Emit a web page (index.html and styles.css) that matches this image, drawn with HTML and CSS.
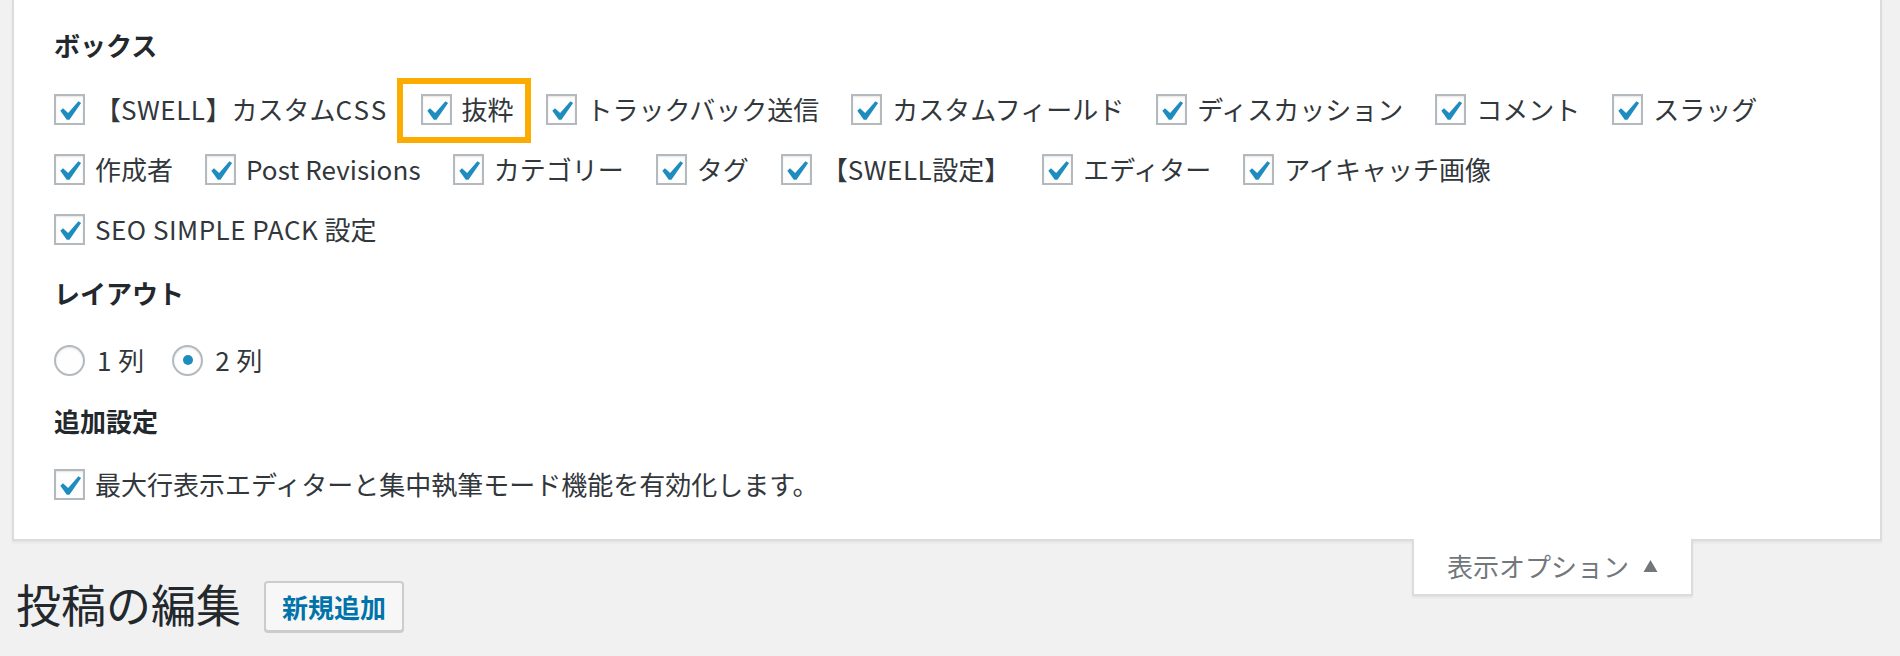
FILE: index.html
```html
<!DOCTYPE html>
<html lang="ja">
<head>
<meta charset="utf-8">
<title>投稿の編集</title>
<link rel="stylesheet" href="styles.css">
</head>
<body>
<div class="wrap">
  <div class="screen-options">
    <h5 class="sec sec-boxes">ボックス</h5>
    <div class="rows">
      <div class="row">
        <label class="item"><span class="cb"><svg viewBox="0 0 27 27"><path d="M14.83 4.89l1.34.94-5.81 8.38H9.02L5.78 9.67l1.34-1.25 2.57 2.4z" transform="translate(-7.25 -4.6) scale(2)"/></svg></span><span class="txt">【<span class="lat">SWELL</span>】カスタム<span class="lat lat-wide">CSS</span></span></label>
        <label class="item highlight"><span class="cb"><svg viewBox="0 0 27 27"><path d="M14.83 4.89l1.34.94-5.81 8.38H9.02L5.78 9.67l1.34-1.25 2.57 2.4z" transform="translate(-7.25 -4.6) scale(2)"/></svg></span><span class="txt">抜粋</span></label>
        <label class="item"><span class="cb"><svg viewBox="0 0 27 27"><path d="M14.83 4.89l1.34.94-5.81 8.38H9.02L5.78 9.67l1.34-1.25 2.57 2.4z" transform="translate(-7.25 -4.6) scale(2)"/></svg></span><span class="txt">トラックバック送信</span></label>
        <label class="item"><span class="cb"><svg viewBox="0 0 27 27"><path d="M14.83 4.89l1.34.94-5.81 8.38H9.02L5.78 9.67l1.34-1.25 2.57 2.4z" transform="translate(-7.25 -4.6) scale(2)"/></svg></span><span class="txt">カスタムフィールド</span></label>
        <label class="item"><span class="cb"><svg viewBox="0 0 27 27"><path d="M14.83 4.89l1.34.94-5.81 8.38H9.02L5.78 9.67l1.34-1.25 2.57 2.4z" transform="translate(-7.25 -4.6) scale(2)"/></svg></span><span class="txt">ディスカッション</span></label>
        <label class="item"><span class="cb"><svg viewBox="0 0 27 27"><path d="M14.83 4.89l1.34.94-5.81 8.38H9.02L5.78 9.67l1.34-1.25 2.57 2.4z" transform="translate(-7.25 -4.6) scale(2)"/></svg></span><span class="txt">コメント</span></label>
        <label class="item"><span class="cb"><svg viewBox="0 0 27 27"><path d="M14.83 4.89l1.34.94-5.81 8.38H9.02L5.78 9.67l1.34-1.25 2.57 2.4z" transform="translate(-7.25 -4.6) scale(2)"/></svg></span><span class="txt">スラッグ</span></label>
      </div>
      <div class="row">
        <label class="item"><span class="cb"><svg viewBox="0 0 27 27"><path d="M14.83 4.89l1.34.94-5.81 8.38H9.02L5.78 9.67l1.34-1.25 2.57 2.4z" transform="translate(-7.25 -4.6) scale(2)"/></svg></span><span class="txt">作成者</span></label>
        <label class="item"><span class="cb"><svg viewBox="0 0 27 27"><path d="M14.83 4.89l1.34.94-5.81 8.38H9.02L5.78 9.67l1.34-1.25 2.57 2.4z" transform="translate(-7.25 -4.6) scale(2)"/></svg></span><span class="txt lat-tight">Post Revisions</span></label>
        <label class="item"><span class="cb"><svg viewBox="0 0 27 27"><path d="M14.83 4.89l1.34.94-5.81 8.38H9.02L5.78 9.67l1.34-1.25 2.57 2.4z" transform="translate(-7.25 -4.6) scale(2)"/></svg></span><span class="txt">カテゴリー</span></label>
        <label class="item"><span class="cb"><svg viewBox="0 0 27 27"><path d="M14.83 4.89l1.34.94-5.81 8.38H9.02L5.78 9.67l1.34-1.25 2.57 2.4z" transform="translate(-7.25 -4.6) scale(2)"/></svg></span><span class="txt">タグ</span></label>
        <label class="item"><span class="cb"><svg viewBox="0 0 27 27"><path d="M14.83 4.89l1.34.94-5.81 8.38H9.02L5.78 9.67l1.34-1.25 2.57 2.4z" transform="translate(-7.25 -4.6) scale(2)"/></svg></span><span class="txt">【<span class="lat">SWELL</span>設定】</span></label>
        <label class="item"><span class="cb"><svg viewBox="0 0 27 27"><path d="M14.83 4.89l1.34.94-5.81 8.38H9.02L5.78 9.67l1.34-1.25 2.57 2.4z" transform="translate(-7.25 -4.6) scale(2)"/></svg></span><span class="txt">エディター</span></label>
        <label class="item"><span class="cb"><svg viewBox="0 0 27 27"><path d="M14.83 4.89l1.34.94-5.81 8.38H9.02L5.78 9.67l1.34-1.25 2.57 2.4z" transform="translate(-7.25 -4.6) scale(2)"/></svg></span><span class="txt">アイキャッチ画像</span></label>
      </div>
      <div class="row">
        <label class="item"><span class="cb"><svg viewBox="0 0 27 27"><path d="M14.83 4.89l1.34.94-5.81 8.38H9.02L5.78 9.67l1.34-1.25 2.57 2.4z" transform="translate(-7.25 -4.6) scale(2)"/></svg></span><span class="txt"><span class="lat">SEO SIMPLE PACK </span>設定</span></label>
      </div>
    </div>

    <h5 class="sec sec-layout">レイアウト</h5>
    <div class="row row-radio">
      <label class="item item-radio"><span class="rd"></span><span class="txt"><span class="lat">1 </span>列</span></label>
      <label class="item item-radio"><span class="rd checked"></span><span class="txt"><span class="lat">2 </span>列</span></label>
    </div>

    <h5 class="sec sec-extra">追加設定</h5>
    <div class="row row-extra">
      <label class="item"><span class="cb"><svg viewBox="0 0 27 27"><path d="M14.83 4.89l1.34.94-5.81 8.38H9.02L5.78 9.67l1.34-1.25 2.57 2.4z" transform="translate(-7.25 -4.6) scale(2)"/></svg></span><span class="txt">最大行表示エディターと集中執筆モード機能を有効化します。</span></label>
    </div>
  </div>

  <div class="page-head">
    <div class="title-group">
      <h1 class="title">投稿の編集</h1>
      <a class="btn">新規追加</a>
    </div>
    <div class="tab">表示オプション<svg class="arrow" viewBox="0 0 14 12"><path d="M7 0L14 12H0z"/></svg></div>
  </div>
</div>
</body>
</html>
```
FILE: styles.css
```css
html, body {
  margin: 0;
  padding: 0;
}
body {
  background: #f1f1f1;
  font-family: "Noto Sans CJK JP", "Noto Sans", sans-serif;
  color: #444;
  width: 1900px;
  height: 656px;
  overflow: hidden;
}
.wrap {
  margin: 0 18px 0 12px;
}
.screen-options {
  background: #fff;
  border: 2px solid #dcdcdc;
  border-top: none;
  box-shadow: 0 2px 2px rgba(0, 0, 0, 0.05);
  padding: 25px 20px 25px 40px;
}
.sec {
  margin: 0;
  font-size: 26px;
  line-height: 40px;
  font-weight: 700;
  color: #23282d;
}
.sec-layout { margin-top: 14px; }
.sec-extra { margin-top: 11px; }
.rows {
  margin-top: 14px;
}
.row {
  display: flex;
  height: 60px;
  align-items: center;
}
.row-radio { margin-top: 17px; }
.row-extra { margin-top: 13px; }
.item {
  display: flex;
  align-items: center;
  gap: 10px;
  padding-right: 32px;
  font-size: 26px;
  line-height: 40px;
  white-space: nowrap;
  position: relative;
}
.item-radio {
  gap: 12px;
  padding-right: 28px;
}
.txt {
  color: #32373c;
}
.lat {
  letter-spacing: 0.5px;
}
.lat-wide {
  letter-spacing: 2.2px;
}
.lat-tight {
  letter-spacing: 0.1px;
}
.cb {
  box-sizing: border-box;
  width: 31px;
  height: 31px;
  border: 2px solid #b4b9be;
  background: #fefefe;
  box-shadow: inset 0 1px 2px rgba(0, 0, 0, 0.1);
  display: flex;
  flex: none;
}
.cb svg {
  width: 27px;
  height: 27px;
  fill: #1e8cbe;
}
.rd {
  box-sizing: border-box;
  width: 31px;
  height: 31px;
  border: 2px solid #b4b9be;
  border-radius: 50%;
  background: #fefefe;
  box-shadow: inset 0 1px 2px rgba(0, 0, 0, 0.1);
  display: flex;
  align-items: center;
  justify-content: center;
  flex: none;
}
.rd.checked::before {
  content: "";
  width: 10px;
  height: 10px;
  border-radius: 50%;
  background: #1e8cbe;
}
.highlight::after {
  content: "";
  position: absolute;
  left: -24px;
  top: -11px;
  width: 134px;
  height: 65px;
  box-sizing: border-box;
  border: 6px solid #fcab00;
}
.page-head {
  display: flex;
  justify-content: space-between;
  align-items: flex-start;
}
.title-group {
  display: flex;
  align-items: center;
  gap: 23px;
  margin: 35px 0 0 4px;
}
.title {
  margin: 0;
  font-size: 45px;
  line-height: 56px;
  font-weight: 400;
  color: #23282d;
}
.btn {
  display: block;
  box-sizing: border-box;
  height: 51px;
  margin-top: 5px;
  padding: 0 16px;
  border: 2px solid #cccccc;
  border-radius: 4px;
  background: #f7f7f7;
  box-shadow: 0 1px 0 #cccccc;
  font-size: 26px;
  line-height: 47px;
  font-weight: 700;
  color: #0073aa;
}
.tab {
  margin: -2px 189px 0 0;
  box-sizing: border-box;
  height: 57px;
  padding: 9px 33px 10px 33px;
  background: #fff;
  border: 2px solid #dcdcdc;
  border-top: none;
  box-shadow: 0 2px 2px rgba(0, 0, 0, 0.05);
  font-size: 26px;
  line-height: 36px;
  color: #72777c;
  display: flex;
  align-items: center;
  gap: 14px;
}
.arrow {
  width: 15px;
  height: 12px;
  fill: #72777c;
}
```
